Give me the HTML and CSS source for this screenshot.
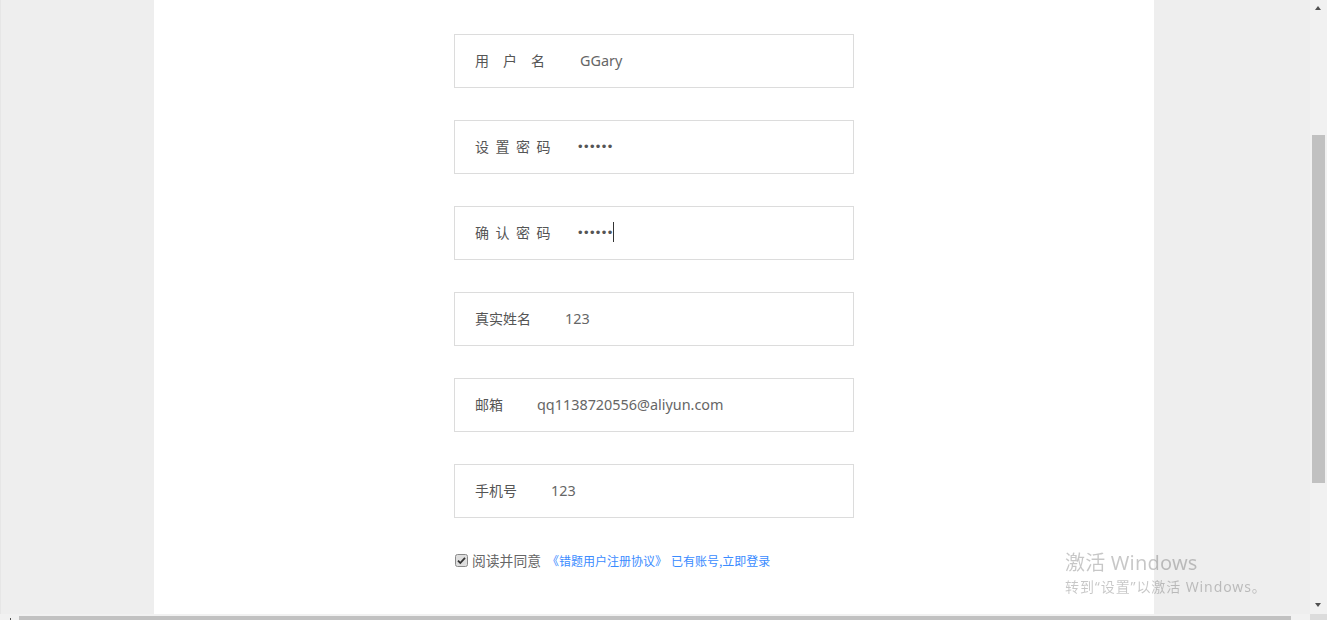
FILE: index.html
```html
<!DOCTYPE html>
<html lang="zh-CN">
<head>
  <meta charset="UTF-8" />
  <meta name="viewport" content="width=device-width, initial-scale=1.0"/>
  <title>注册</title>
  <link rel="stylesheet" href="styles.css">
</head>
<body>
  <div class="screen">
    <div class="viewport">
      <div class="panel">
        <div class="form">
          <div class="field">
            <span class="label spaced-wide">用户名</span>
            <span class="value">GGary</span>
          </div>
          <div class="field">
            <span class="label spaced">设置密码</span>
            <span class="value dots">••••••</span>
          </div>
          <div class="field">
            <span class="label spaced">确认密码</span>
            <span class="value dots">••••••</span><span class="caret"></span>
          </div>
          <div class="field">
            <span class="label">真实姓名</span>
            <span class="value">123</span>
          </div>
          <div class="field">
            <span class="label">邮箱</span>
            <span class="value">qq1138720556@aliyun.com</span>
          </div>
          <div class="field">
            <span class="label">手机号</span>
            <span class="value">123</span>
          </div>

          <div class="agree">
            <svg class="check" width="13" height="13" viewBox="0 0 13 13">
              <rect x="0.5" y="0.5" width="12" height="12" rx="2" fill="#dedede" stroke="#8a8a8a"/>
              <path d="M3 6.6 L5.3 9 L10 3.8" fill="none" stroke="#333" stroke-width="1.8"/>
            </svg>
            <span class="agree-text">阅读并同意</span>
            <a class="link" href="#">《错题用户注册协议》</a>
            <a class="link login" href="#">已有账号,立即登录</a>
          </div>
        </div>
      </div>
    </div>

    <!-- fake vertical scrollbar -->
    <div class="vbar">
      <span class="arrow up"></span>
      <div class="vthumb"></div>
      <span class="arrow down"></span>
    </div>

    <!-- fake horizontal scrollbar (cut off by window) -->
    <div class="hbar">
      <span class="harrow"></span>
      <div class="hthumb"></div>
    </div>
    <div class="corner"></div>
  </div>

  <div class="watermark">
    <div class="wm-title">激活 Windows</div>
    <div class="wm-sub">转到“设置”以激活 Windows。</div>
  </div>
</body>
</html>
```

FILE: styles.css
```css
html, body {
  margin: 0;
  padding: 0;
  height: 100%;
  overflow: hidden;
}
body {
  background: #eeeeee;
  font-family: "Noto Sans", "Noto Sans CJK SC", sans-serif;
  color: #555;
}
.screen {
  display: grid;
  grid-template-columns: 1fr 17px;
  grid-template-rows: 614px 6px;
  height: 620px;
}
.viewport {
  overflow: hidden;
  border-left: 1px solid #e6e6e6;
}
.panel {
  width: 1000px;
  height: 100%;
  margin-left: 153px;
  background: #fff;
}
.form {
  width: 400px;
  margin-left: 300px;
  padding-top: 34px;
}
.field {
  display: flex;
  align-items: center;
  height: 50px;
  padding-bottom: 2px;
  margin-bottom: 32px;
  padding-left: 20px;
  border: 1px solid #dcdcdc;
  font-size: 14px;
}
.label {
  margin-right: 34px;
  color: #555;
  font-family: "Noto Sans CJK SC", sans-serif;
}
.spaced-wide {
  letter-spacing: 14px;
  margin-right: 21px;
}
.spaced {
  letter-spacing: 6.5px;
  margin-right: 21px;
}
.value {
  color: #666;
  font-size: 14.4px;
}
.dots {
  font-family: "Liberation Sans", sans-serif;
  font-size: 13px;
  letter-spacing: 1.4px;
  color: #555;
}
.caret {
  display: inline-block;
  width: 1px;
  height: 20px;
  margin-left: -1px;
  background: #333;
}
.agree {
  display: flex;
  align-items: center;
  margin-top: -2px;
  padding-left: 1px;
  height: 24px;
}
.check {
  margin-right: 4px;
}
.agree-text {
  font-size: 13.8px;
  color: #666;
  margin-right: 6px;
  font-family: "Noto Sans CJK SC", sans-serif;
}
.link {
  font-size: 12px;
  color: #3a8bff;
  text-decoration: none;
  font-family: "Noto Sans CJK SC", sans-serif;
}
.login {
  margin-left: 4px;
}

/* scrollbars */
.vbar {
  position: relative;
  background: #f1f1f1;
}
.vthumb {
  position: absolute;
  left: 2px;
  right: 2px;
  top: 135px;
  height: 348px;
  background: #c1c1c1;
}
.arrow {
  position: absolute;
  left: 5px;
  width: 0;
  height: 0;
  border-left: 3.5px solid transparent;
  border-right: 3.5px solid transparent;
}
.arrow.up {
  top: 6px;
  border-bottom: 4px solid #505050;
}
.arrow.down {
  bottom: 7px;
  border-top: 4px solid #505050;
}
.hbar {
  position: relative;
  background: #f1f1f1;
}
.hthumb {
  position: absolute;
  left: 19px;
  right: 19px;
  top: 2px;
  bottom: 0;
  background: #c1c1c1;
}
.harrow {
  position: absolute;
  left: 10px;
  top: 4px;
  width: 1px;
  height: 2px;
  background: #505050;
}
.corner {
  background: #dcdcdc;
}

.watermark {
  position: fixed;
  left: 1065px;
  top: 549px;
  color: rgba(0, 0, 0, 0.22);
  font-family: "Noto Sans", "Noto Sans CJK SC", sans-serif;
  pointer-events: none;
}
.wm-title {
  font-size: 20px;
  line-height: 28px;
  letter-spacing: 0.2px;
}
.wm-sub {
  font-size: 14px;
  line-height: 20px;
  letter-spacing: 0.9px;
}
```
